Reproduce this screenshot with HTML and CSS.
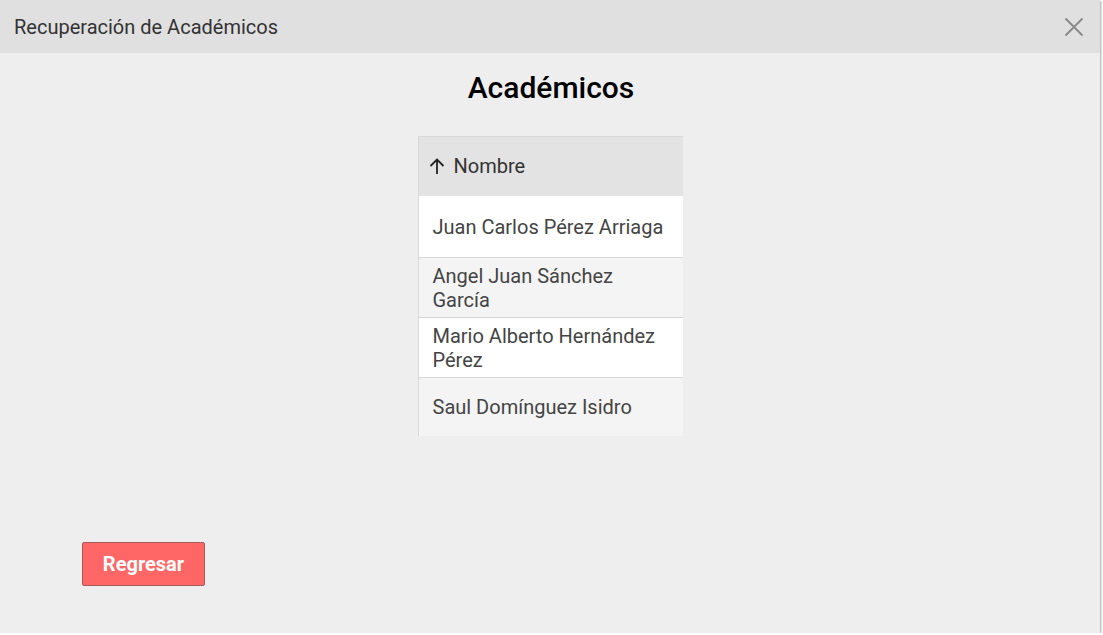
FILE: index.html
```html
<!DOCTYPE html>
<html lang="es">
<head>
<meta charset="utf-8">
<title>Recuperación de Académicos</title>
<link rel="stylesheet" href="styles.css">
</head>
<body>
<div class="dialog">
  <div class="dialog-header">
    <span class="dialog-title">Recuperación de Académicos</span>
    <button class="close-btn" aria-label="Cerrar">
      <svg width="20" height="20" viewBox="0 0 20 20"><path d="M1.5 1.5 L18.5 18.5 M18.5 1.5 L1.5 18.5" stroke="#8a8a8a" stroke-width="2" fill="none"/></svg>
    </button>
  </div>
  <div class="dialog-body">
    <h1 class="section-title">Académicos</h1>
    <table class="grid">
      <thead>
        <tr><th><span class="sort-arrow"><svg width="18" height="18" viewBox="0 0 18 18"><path d="M9 17 V2.5 M2.5 9 L9 2.5 L15.5 9" stroke="#222" stroke-width="1.8" fill="none"/></svg></span>Nombre</th></tr>
      </thead>
      <tbody>
        <tr><td>Juan Carlos Pérez Arriaga</td></tr>
        <tr class="alt"><td>Angel Juan Sánchez García</td></tr>
        <tr><td>Mario Alberto Hernández Pérez</td></tr>
        <tr class="alt"><td>Saul Domínguez Isidro</td></tr>
      </tbody>
    </table>
    <div class="actions">
      <button class="btn-back">Regresar</button>
    </div>
  </div>
</div>
</body>
</html>
```
FILE: styles.css
```css
html, body {
  margin: 0;
  padding: 0;
  background: #ffffff;
  font-family: Roboto, "Liberation Sans", Arial, sans-serif;
}
.dialog {
  width: 1100px;
  height: 633px;
  background: #eeeeee;
  display: flex;
  flex-direction: column;
  box-shadow: 1px 1px 2px rgba(0,0,0,0.35);
}
.dialog-header {
  height: 53px;
  background: #e0e0e0;
  display: flex;
  align-items: center;
  justify-content: space-between;
  padding: 0 16px 0 14px;
  flex-shrink: 0;
}
.dialog-title {
  font-size: 20px;
  color: #333333;
}
.close-btn {
  background: none;
  border: 0;
  padding: 0;
  width: 20px;
  height: 20px;
  display: flex;
}
.dialog-body {
  flex: 1;
  display: flex;
  flex-direction: column;
  align-items: center;
}
.section-title {
  margin: 17px 0 0 2px;
  font-size: 30px;
  font-weight: 500;
  color: #000;
  line-height: 36px;
}
.grid {
  margin-top: 30px;
  border-collapse: collapse;
  width: 265px;
  font-size: 20px;
  color: #444444;
  border-left: 1px solid #d9d9d9;
}
.grid th {
  background: #e3e3e3;
  border-top: 1px solid #d9d9d9;
  height: 59px;
  text-align: left;
  font-weight: 400;
  color: #333;
  padding: 0 14px 0 9px;
}
.sort-arrow {
  display: inline-block;
  vertical-align: -2px;
  margin-right: 8px;
}
.grid td {
  background: #ffffff;
  border-top: 1px solid #d6d6d6;
  height: 59px;
  padding: 6px 14px 5px 14px;
  box-sizing: border-box;
  line-height: 24px;
}
.grid tbody tr:first-child td {
  border-top: 0;
  height: 61px;
}
.grid tr.alt td {
  background: #f4f4f4;
}
.actions {
  align-self: stretch;
  margin-top: auto;
  padding: 0 0 47px 82px;
}
.btn-back {
  width: 123px;
  height: 44px;
  background: #ff6666;
  border: 1px solid #a85a5a;
  border-radius: 2px;
  color: #ffffff;
  font-family: Roboto, "Liberation Sans", Arial, sans-serif;
  font-size: 20px;
  font-weight: 700;
  padding: 0;
}
```
